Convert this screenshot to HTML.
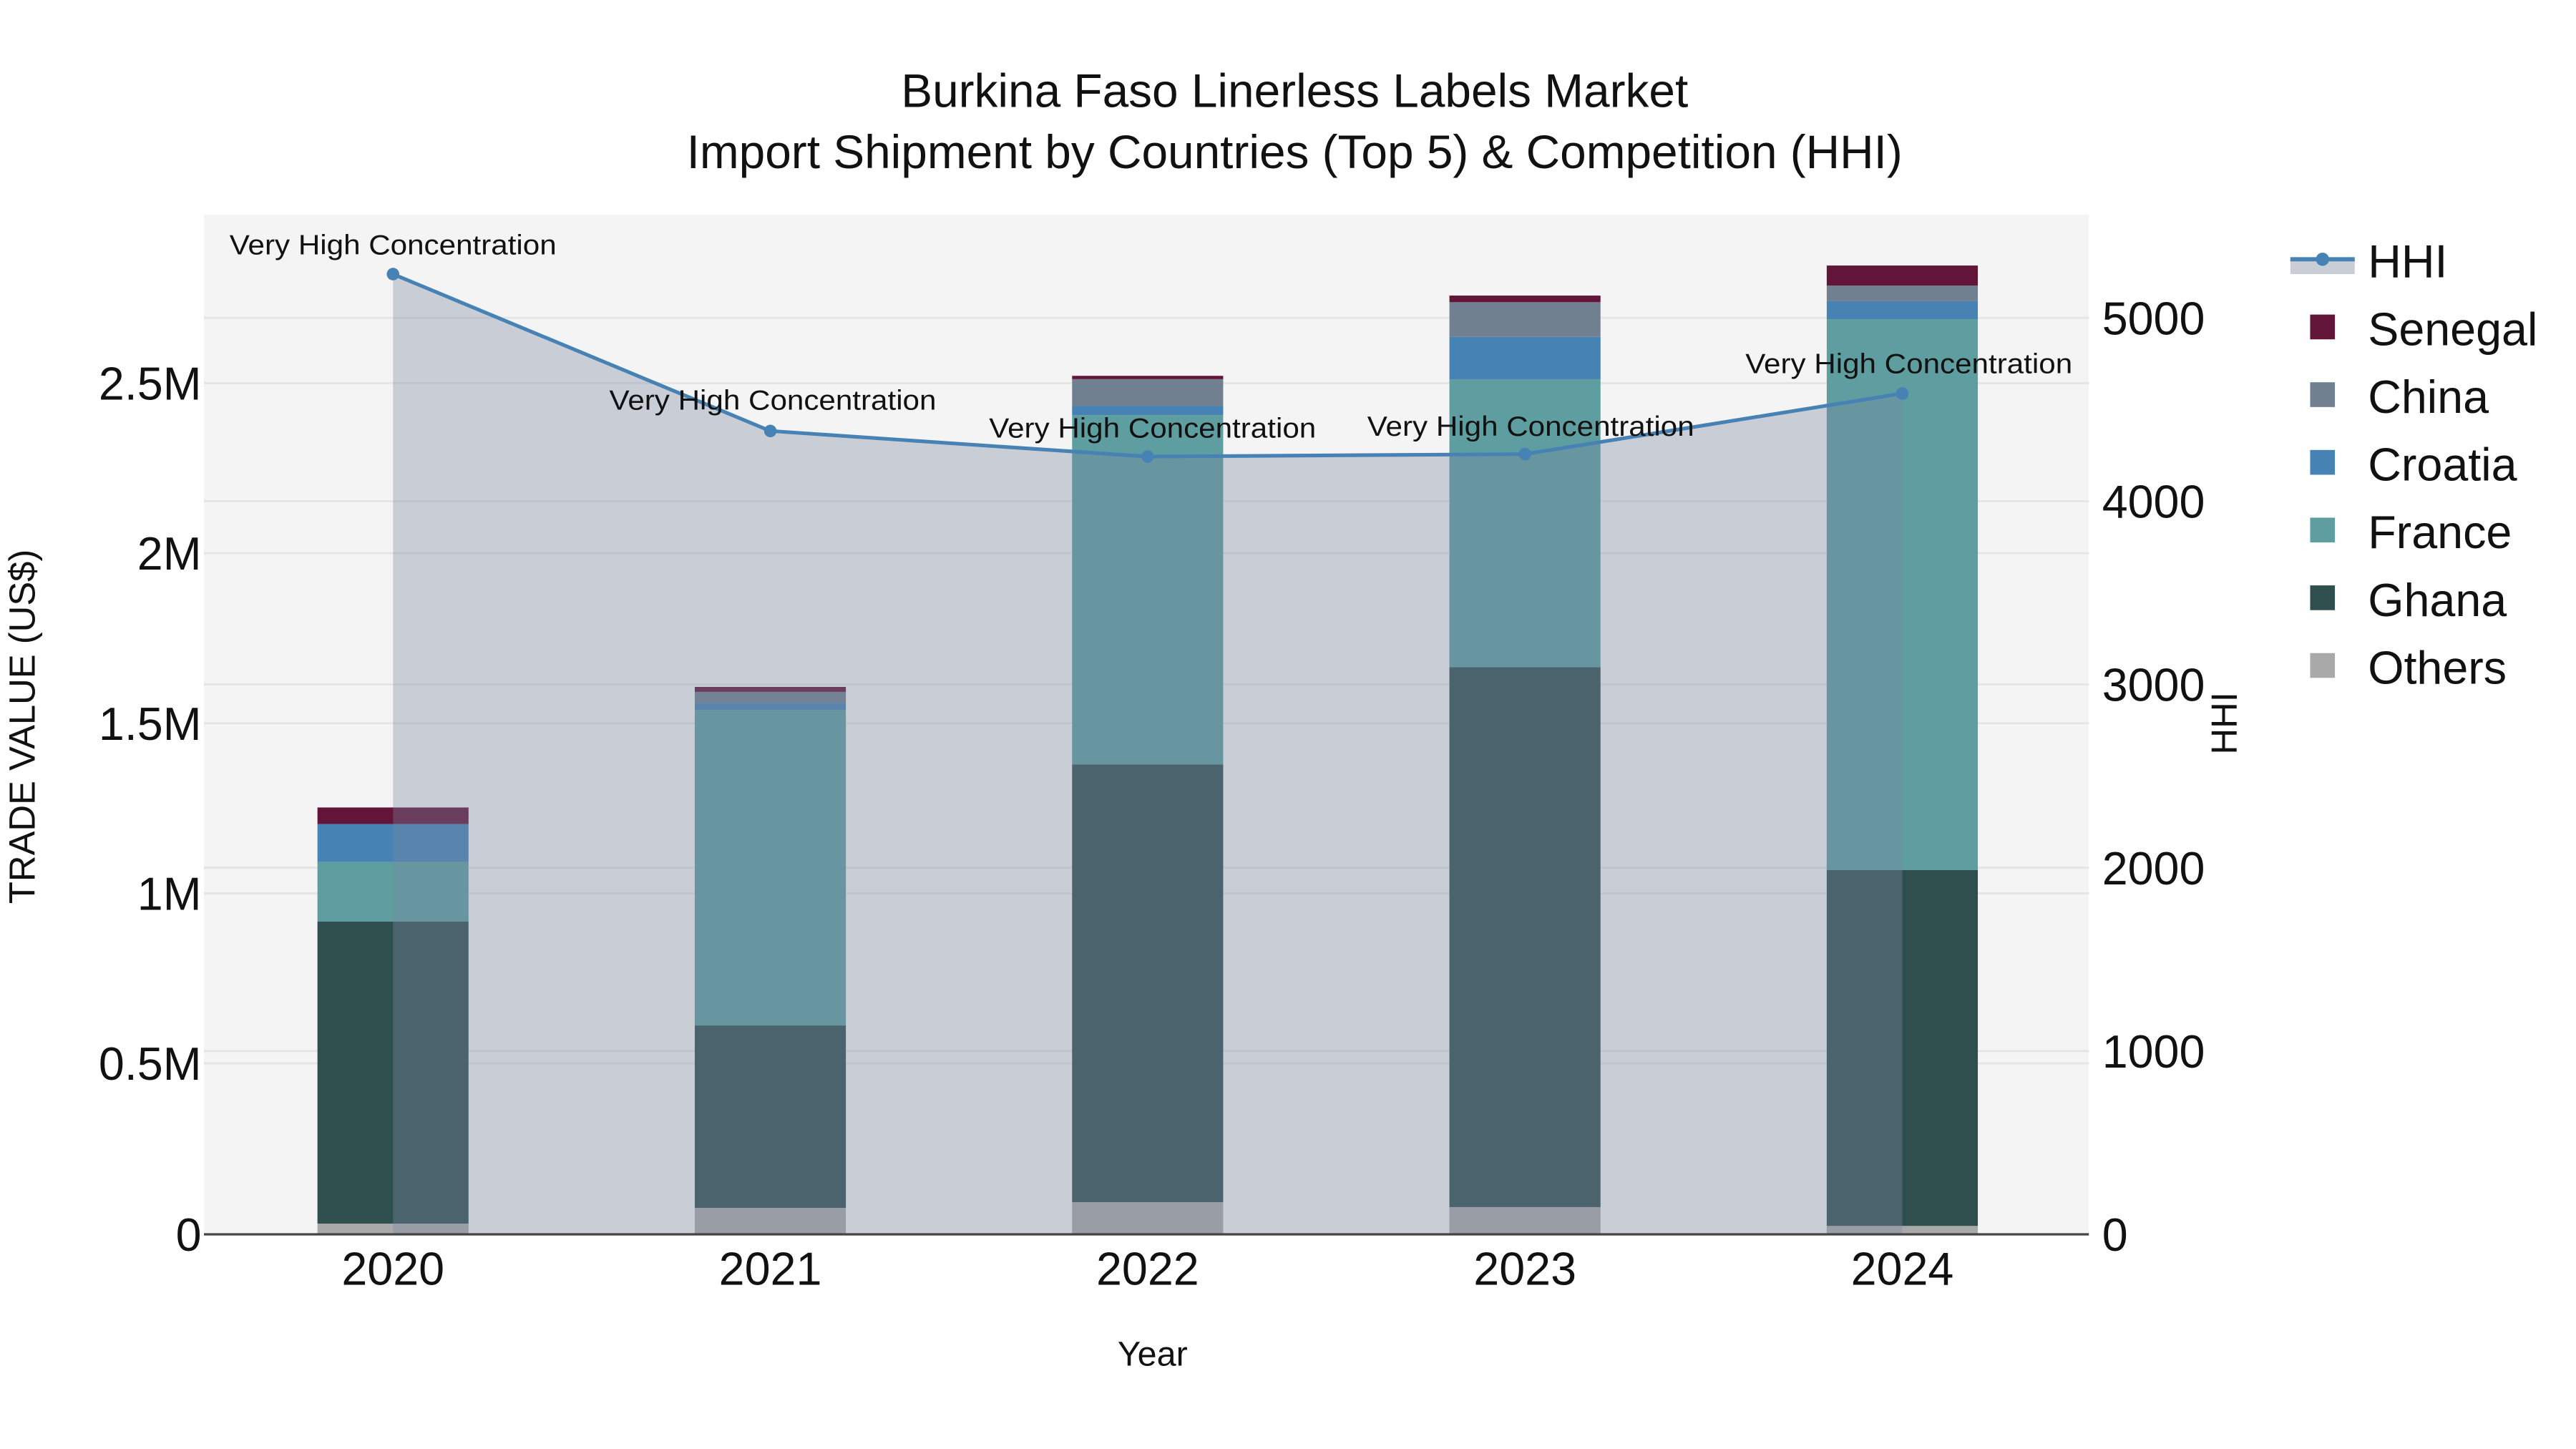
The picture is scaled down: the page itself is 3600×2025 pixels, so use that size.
<!DOCTYPE html>
<html><head><meta charset="utf-8">
<style>
html,body{margin:0;padding:0;background:#fff;width:3600px;height:2025px;overflow:hidden}
svg{display:block}
text{font-family:"Liberation Sans",sans-serif;fill:#111}
</style></head>
<body>
<svg width="3600" height="2025" viewBox="0 0 1560 877.5" xmlns="http://www.w3.org/2000/svg">
<rect x="0" y="0" width="1560" height="877.5" fill="#fff"/>
<rect x="123.5" y="130" width="1141.5" height="617.5" fill="#f4f4f4"/>
<g stroke="#e4e4e4" stroke-width="1.2">
<line x1="123.5" x2="1265" y1="232" y2="232"/>
<line x1="123.5" x2="1265" y1="335" y2="335"/>
<line x1="123.5" x2="1265" y1="438" y2="438"/>
<line x1="123.5" x2="1265" y1="541" y2="541"/>
<line x1="123.5" x2="1265" y1="644" y2="644"/>
<line x1="123.5" x2="1265" y1="192.5" y2="192.5"/>
<line x1="123.5" x2="1265" y1="303.5" y2="303.5"/>
<line x1="123.5" x2="1265" y1="414.5" y2="414.5"/>
<line x1="123.5" x2="1265" y1="525.5" y2="525.5"/>
<line x1="123.5" x2="1265" y1="636.5" y2="636.5"/>
</g>
<g>
<rect x="192.25" width="91.5" y="741" height="6.5" fill="#a9a9a9"/>
<rect x="192.25" width="91.5" y="558" height="183" fill="#2f4f4f"/>
<rect x="192.25" width="91.5" y="522" height="36" fill="#5f9ea0"/>
<rect x="192.25" width="91.5" y="499" height="23" fill="#4682b4"/>
<rect x="192.25" width="91.5" y="489" height="10" fill="#621439"/>
<rect x="420.75" width="91.5" y="731.5" height="16" fill="#a9a9a9"/>
<rect x="420.75" width="91.5" y="621" height="110.5" fill="#2f4f4f"/>
<rect x="420.75" width="91.5" y="430" height="191" fill="#5f9ea0"/>
<rect x="420.75" width="91.5" y="426" height="4" fill="#4682b4"/>
<rect x="420.75" width="91.5" y="419" height="7" fill="#708090"/>
<rect x="420.75" width="91.5" y="416" height="3" fill="#621439"/>
<rect x="649.25" width="91.5" y="728" height="19.5" fill="#a9a9a9"/>
<rect x="649.25" width="91.5" y="463" height="265" fill="#2f4f4f"/>
<rect x="649.25" width="91.5" y="251.4" height="211.6" fill="#5f9ea0"/>
<rect x="649.25" width="91.5" y="245.9" height="5.5" fill="#4682b4"/>
<rect x="649.25" width="91.5" y="229.6" height="16.3" fill="#708090"/>
<rect x="649.25" width="91.5" y="227.6" height="2" fill="#621439"/>
<rect x="877.75" width="91.5" y="731" height="16.5" fill="#a9a9a9"/>
<rect x="877.75" width="91.5" y="404" height="327" fill="#2f4f4f"/>
<rect x="877.75" width="91.5" y="229.7" height="174.3" fill="#5f9ea0"/>
<rect x="877.75" width="91.5" y="204" height="25.7" fill="#4682b4"/>
<rect x="877.75" width="91.5" y="183" height="21" fill="#708090"/>
<rect x="877.75" width="91.5" y="179" height="4" fill="#621439"/>
<rect x="1106.25" width="91.5" y="742.4" height="5.1" fill="#a9a9a9"/>
<rect x="1106.25" width="91.5" y="526.8" height="215.6" fill="#2f4f4f"/>
<rect x="1106.25" width="91.5" y="193.3" height="333.5" fill="#5f9ea0"/>
<rect x="1106.25" width="91.5" y="182.4" height="10.9" fill="#4682b4"/>
<rect x="1106.25" width="91.5" y="172.9" height="9.5" fill="#708090"/>
<rect x="1106.25" width="91.5" y="160.8" height="12.1" fill="#621439"/>
</g>
<polygon points="238,166 466.5,261 695,276.5 923.5,275 1152,238.3 1152,747.5 238,747.5" fill="rgb(123,137,160)" fill-opacity="0.36"/>
<line x1="123.5" x2="1265" y1="747.5" y2="747.5" stroke="#444" stroke-width="1.4"/>
<polyline points="238,166 466.5,261 695,276.5 923.5,275 1152,238.3" fill="none" stroke="#4682b4" stroke-width="2.2"/>
<g fill="#4682b4">
<circle cx="238" cy="166" r="3.8"/><circle cx="466.5" cy="261" r="3.8"/><circle cx="695" cy="276.5" r="3.8"/><circle cx="923.5" cy="275" r="3.8"/><circle cx="1152" cy="238.3" r="3.8"/>
</g>
<g font-size="17" text-anchor="middle">
<text x="238" y="154" textLength="198" lengthAdjust="spacingAndGlyphs">Very High Concentration</text>
<text x="468" y="248" textLength="198" lengthAdjust="spacingAndGlyphs">Very High Concentration</text>
<text x="698" y="265" textLength="198" lengthAdjust="spacingAndGlyphs">Very High Concentration</text>
<text x="927" y="264" textLength="198" lengthAdjust="spacingAndGlyphs">Very High Concentration</text>
<text x="1156" y="226" textLength="198" lengthAdjust="spacingAndGlyphs">Very High Concentration</text>
</g>
<g font-size="28.5" text-anchor="middle">
<text x="784" y="64.7">Burkina Faso Linerless Labels Market</text>
<text x="784" y="101.8">Import Shipment by Countries (Top 5) &amp; Competition (HHI)</text>
</g>
<g font-size="28" text-anchor="end">
<text x="122" y="757.5">0</text>
<text x="122" y="654">0.5M</text>
<text x="122" y="551">1M</text>
<text x="122" y="448">1.5M</text>
<text x="122" y="345">2M</text>
<text x="122" y="242">2.5M</text>
</g>
<g font-size="28" text-anchor="start">
<text x="1273" y="757.5">0</text>
<text x="1273" y="646.5">1000</text>
<text x="1273" y="535.5">2000</text>
<text x="1273" y="424.5">3000</text>
<text x="1273" y="313.5">4000</text>
<text x="1273" y="202.5">5000</text>
</g>
<g font-size="28" text-anchor="middle">
<text x="238" y="778">2020</text>
<text x="466.5" y="778">2021</text>
<text x="695" y="778">2022</text>
<text x="923.5" y="778">2023</text>
<text x="1152" y="778">2024</text>
</g>
<text x="698" y="827" font-size="21" text-anchor="middle">Year</text>
<text transform="translate(21,440) rotate(-90)" font-size="22" text-anchor="middle">TRADE VALUE (US$)</text>
<text transform="translate(1354.6,438) rotate(-90)" font-size="22" text-anchor="middle">HHI</text>
<rect x="1387" y="157" width="39" height="9" fill="#c9ced6"/>
<line x1="1387" x2="1426" y1="157" y2="157" stroke="#4682b4" stroke-width="2.5"/>
<circle cx="1406.5" cy="157" r="4" fill="#4682b4"/>
<rect x="1399" y="190.5" width="15" height="15" fill="#621439"/>
<rect x="1399" y="231.5" width="15" height="15" fill="#708090"/>
<rect x="1399" y="272.5" width="15" height="15" fill="#4682b4"/>
<rect x="1399" y="313.5" width="15" height="15" fill="#5f9ea0"/>
<rect x="1399" y="354.5" width="15" height="15" fill="#2f4f4f"/>
<rect x="1399" y="395.5" width="15" height="15" fill="#a9a9a9"/>
<g font-size="28">
<text x="1434" y="168">HHI</text>
<text x="1434" y="209">Senegal</text>
<text x="1434" y="250">China</text>
<text x="1434" y="291">Croatia</text>
<text x="1434" y="332">France</text>
<text x="1434" y="373">Ghana</text>
<text x="1434" y="414">Others</text>
</g>
</svg>
</body></html>
